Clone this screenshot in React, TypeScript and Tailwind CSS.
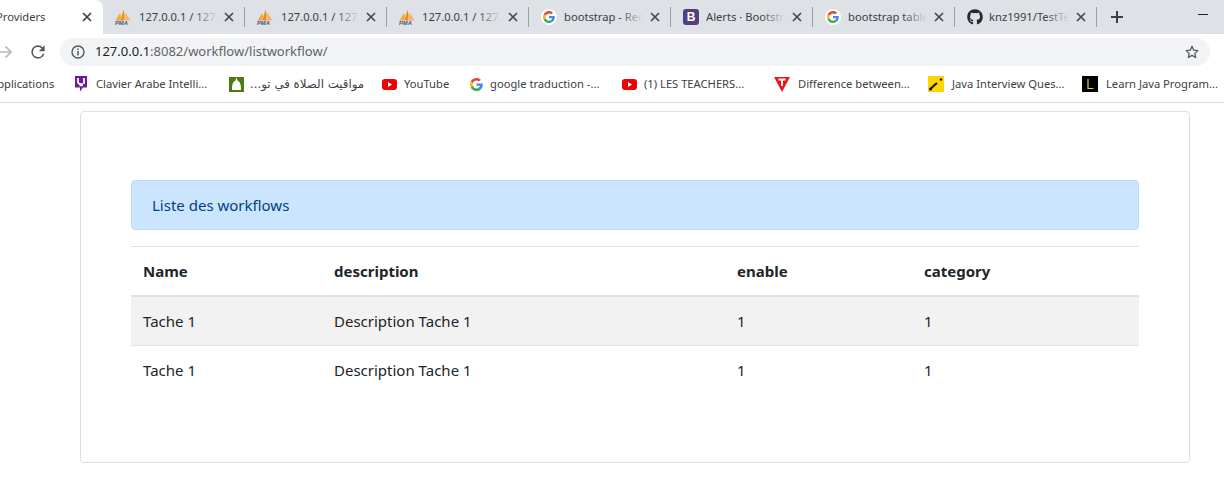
import React from "react";
import { FaGithub } from "react-icons/fa";

const ui = { fontFamily: '"Noto Sans", "Open Sans", sans-serif' };

function Close({ dark = false }: { dark?: boolean }) {
  return (
    <svg width="10" height="10" viewBox="0 0 10 10" className="shrink-0">
      <path d="M1 1L9 9M9 1L1 9" stroke={dark ? "#3c4043" : "#45484c"} strokeWidth="1.7" fill="none" />
    </svg>
  );
}

function Pma() {
  return (
    <svg width="16" height="16" viewBox="0 0 16 16" className="shrink-0">
      <path d="M0.500 11.500L5 4L6 7L5.500 11.500Z" fill="#f7a745" />
      <path d="M5.500 11.500L8.500 0.500L9.500 6L9 11.500Z" fill="#ee8a1c" />
      <path d="M9 11.500L10.500 3.500L15.500 11.500Z" fill="#f9b56e" />
      <text x="0" y="16" fontSize="5.8" fontWeight="700" fontStyle="italic" fill="#46597a" fontFamily="Liberation Sans, sans-serif">PMA</text>
    </svg>
  );
}

function GoogleG({ size = 14 }: { size?: number }) {
  return (
    <svg width={size} height={size} viewBox="0 0 48 48" className="shrink-0">
      <path fill="#EA4335" d="M24 9.5c3.5 0 6.700 1.300 9.200 3.500l6.900-6.900C35.900 2.400 30.300 0 24 0 14.600 0 6.500 5.400 2.600 13.200l8 6.200C12.500 13.700 17.800 9.500 24 9.500z" />
      <path fill="#4285F4" d="M46.900 24.500c0-1.600-.1-3.100-.4-4.500H24v9h12.900c-.6 3-2.200 5.500-4.800 7.200l7.700 6c4.500-4.200 7.100-10.300 7.100-17.700z" />
      <path fill="#FBBC05" d="M10.600 28.600c-.5-1.400-.8-3-.8-4.600s.3-3.200.8-4.600l-8-6.200C.9 16.500 0 20.100 0 24s.9 7.500 2.600 10.800l8-6.200z" />
      <path fill="#34A853" d="M24 48c6.500 0 11.900-2.100 15.900-5.800l-7.700-6c-2.200 1.500-5 2.300-8.200 2.300-6.200 0-11.500-4.200-13.400-9.900l-8 6.200C6.500 42.600 14.600 48 24 48z" />
    </svg>
  );
}

function GoogleBadge() {
  return (
    <span className="w-4 h-4 rounded-full bg-white flex items-center justify-center shrink-0">
      <GoogleG size={12} />
    </span>
  );
}

function Youtube() {
  return (
    <svg width="15" height="11" viewBox="0 0 15 11" className="shrink-0">
      <rect width="15" height="11" rx="3" fill="#f00000" />
      <path d="M6 3L10 5.500L6 8Z" fill="#fff" />
    </svg>
  );
}

function Tab({ icon, title, textCls = "ml-[8px] w-[78px]" }: { icon: React.ReactNode; title: string; textCls?: string }) {
  return (
    <div className="relative flex items-center h-[34px] w-[142px] shrink-0">
      <div className="flex items-center justify-between w-full h-[20px] pl-[12px] pr-[10px] border-r border-r-[#9aa0a6]">
        <div className="flex items-center">
          <span className="w-4 flex justify-center shrink-0">{icon}</span>
          <span className={`relative overflow-hidden whitespace-nowrap text-[11.2px] text-[#3c4043] ${textCls}`}>
            {title}
            <span className="absolute right-0 top-0 bottom-0 w-6 bg-gradient-to-r from-transparent to-[#dee1e6]" />
          </span>
        </div>
        <Close />
      </div>
    </div>
  );
}

function Mark({ icon, text, cls, gap = "ml-[7px]", arabic = false }: { icon: React.ReactNode; text: string; cls: string; gap?: string; arabic?: boolean }) {
  return (
    <div className={`flex items-center shrink-0 ${cls}`}>
      <span className="w-4 flex justify-center shrink-0">{icon}</span>
      <span
        dir={arabic ? "rtl" : undefined}
        className={`${gap} whitespace-nowrap text-[11.2px] text-[#3c4043]`}
        style={arabic ? { fontFamily: '"DejaVu Sans", sans-serif', fontSize: 11.8 } : undefined}
      >
        {text}
      </span>
    </div>
  );
}

const rows = [
  { bg: "bg-[#f2f2f2]", h: "h-[50px]" },
  { bg: "bg-white", h: "h-[49px]" },
];

export default function App() {
  return (
    <div className="w-[1224px] h-[492px] overflow-hidden bg-white text-[#212529]" style={ui}>
      {/* tab strip */}
      <div className="flex items-center h-[34px] bg-[#dee1e6]">
        <div className="relative flex items-center w-[103px] h-[34px] shrink-0 bg-white rounded-tr-[8px] overflow-hidden">
          <span className="ml-[-4px] w-[86px] shrink-0 whitespace-nowrap text-[11.2px] text-[#3c4043]">Providers</span>
          <Close dark />
        </div>
        <Tab icon={<Pma />} title="127.0.0.1 / 127.0.0.1" />
        <Tab icon={<Pma />} title="127.0.0.1 / 127.0.0.1" />
        <Tab icon={<Pma />} title="127.0.0.1 / 127.0.0.1" textCls="ml-[7px] w-[79px]" />
        <Tab icon={<GoogleBadge />} title="bootstrap - Recherche" textCls="ml-[7px] w-[79px]" />
        <Tab
          icon={
            <span className="w-4 h-4 rounded-[3px] bg-[#563d7c] text-white text-[12px] font-bold flex items-center justify-center" style={{ fontFamily: '"Liberation Sans", sans-serif' }}>
              B
            </span>
          }
          title="Alerts · Bootstrap"
          textCls="ml-[7px] w-[79px]"
        />
        <Tab icon={<GoogleBadge />} title="bootstrap table" textCls="ml-[7px] w-[79px]" />
        <Tab icon={<FaGithub size={16} color="#24292e" />} title="knz1991/TestTest" textCls="ml-[6px] w-[80px]" />
        <svg width="14" height="14" viewBox="0 0 14 14" className="ml-[13px] shrink-0">
          <path d="M7 1V13M1 7H13" stroke="#3c4043" strokeWidth="2" fill="none" />
        </svg>
        <div className="ml-auto mr-[16px] mb-[6px] w-[10px] h-px bg-[#222]" />
      </div>

      {/* address bar */}
      <div className="flex items-center h-[34px] pt-[2px] bg-white">
        <svg width="16" height="16" viewBox="0 0 16 16" className="ml-[-3px] shrink-0">
          <path d="M1 8H14M8.500 2.500L14 8L8.500 13.500" stroke="#b4b6b9" strokeWidth="1.700" fill="none" />
        </svg>
        <svg width="20" height="20" viewBox="0 0 24 24" className="ml-[15px] shrink-0">
          <path fill="#55585c" d="M17.650 6.350A7.960 7.960 0 0 0 12 4a8 8 0 1 0 7.740 10h-2.080A6 6 0 1 1 12 6c1.660 0 3.140.69 4.220 1.780L13 11h7V4l-2.350 2.350z" />
        </svg>
        <div className="flex items-center ml-[12px] w-[1150px] h-[28px] rounded-full bg-[#f1f3f4]">
          <svg width="14" height="14" viewBox="0 0 14 14" className="ml-[11px] shrink-0">
            <circle cx="7" cy="7" r="6" stroke="#55585c" strokeWidth="1.400" fill="none" />
            <path d="M7 6V10.500M7 3.500V5" stroke="#55585c" strokeWidth="1.500" fill="none" />
          </svg>
          <span className="ml-[10px] text-[13px] text-[#5f6368] whitespace-nowrap">
            <span className="text-[#202124]">127.0.0.1</span>:8082/workflow/listworkflow/
          </span>
          <svg width="16" height="16" viewBox="0 0 24 24" className="ml-auto mr-[10px] shrink-0">
            <path d="M12 3.500L14.600 9.200L20.800 9.900L16.200 14.100L17.500 20.300L12 17.100L6.500 20.300L7.800 14.100L3.200 9.900L9.400 9.200Z" stroke="#55585c" strokeWidth="1.900" fill="none" strokeLinejoin="round" />
          </svg>
        </div>
      </div>

      {/* bookmarks */}
      <div className="flex items-center h-[35px] pb-[1px] bg-white border-b border-b-[#dadce0] overflow-hidden">
        <span className="ml-[-10px] w-[83px] shrink-0 whitespace-nowrap text-[11.2px] text-[#3c4043]">Applications</span>
        <Mark
          cls="w-[155px]"
          text="Clavier Arabe Intelli..."
          icon={
            <svg width="14" height="16" viewBox="0 0 14 16" className="shrink-0">
              <path d="M1 0H13V11.500L9 11.500L6 15.500V11.500H1Z" fill="#6a1b9a" />
              <path d="M4 2V6C4 7.500 5 8 7 8H8V9.500H5.500M10 2V8" stroke="#fff" strokeWidth="1.700" fill="none" />
            </svg>
          }
        />
        <Mark
          cls="w-[153px]"
          arabic
          gap="ml-[6px]"
          text="مواقيت الصلاة في تو..."
          icon={
            <svg width="15" height="15" viewBox="0 0 15 15" className="shrink-0">
              <rect width="15" height="15" fill="#4d7a12" />
              <path d="M7.500 0.500L8.500 3.500C11.500 5 12 8 12 13H3C3 8 3.500 5 6.500 3.500Z" fill="#fff" />
              <path d="M1.500 15V9L3 6V15Z" fill="#4d7a12" />
            </svg>
          }
        />
        <Mark cls="w-[87px]" text="YouTube" icon={<Youtube />} />
        <Mark cls="w-[153px]" gap="ml-[6px]" text="google traduction -..." icon={<GoogleG size={13} />} />
        <Mark cls="w-[153px]" text="(1) LES TEACHERS..." icon={<Youtube />} />
        <Mark
          cls="w-[154px]"
          gap="ml-[8px]"
          text="Difference between..."
          icon={
            <svg width="16" height="16" viewBox="0 0 16 16" className="shrink-0">
              <path d="M0 1H16L8 16Z" fill="#f01414" />
              <path d="M4.500 3.500H11.500M8 3.500V10" stroke="#fff" strokeWidth="2" fill="none" />
            </svg>
          }
        />
        <Mark
          cls="w-[154px]"
          gap="ml-[8px]"
          text="Java Interview Ques..."
          icon={
            <svg width="16" height="16" viewBox="0 0 16 16" className="shrink-0">
              <rect width="16" height="16" fill="#ffd500" />
              <path d="M2.500 13L6 9.500L9 7" stroke="#111" strokeWidth="2" fill="none" />
              <circle cx="2.500" cy="13" r="1.500" fill="#111" />
              <circle cx="13" cy="3.500" r="1.200" fill="#111" />
            </svg>
          }
        />
        <Mark
          cls="w-[142px]"
          gap="ml-[8px]"
          text="Learn Java Program..."
          icon={
            <svg width="16" height="16" viewBox="0 0 16 16" className="shrink-0">
              <rect width="16" height="16" fill="#000" />
              <path d="M6 3V12.500H11.500" stroke="#e6d51e" strokeWidth="1.200" fill="none" />
            </svg>
          }
        />
      </div>

      {/* page */}
      <div className="ml-[80px] mt-[8px] w-[1110px] h-[352px] bg-white border border-[#dfdfdf] rounded-[4px] pt-[68px] px-[50px]">
        <div className="h-[50px] flex items-center px-[20px] bg-[#cce5ff] border border-[#b8daff] rounded-[4px] text-[15px] text-[#004085]">
          Liste des workflows
        </div>
        <table className="mt-[16px] w-[1008px] table-fixed border-collapse text-[15px]">
          <colgroup>
            <col className="w-[191px]" />
            <col className="w-[403px]" />
            <col className="w-[187px]" />
            <col />
          </colgroup>
          <thead>
            <tr className="h-[49px] border-t border-t-[#dee2e6] border-b-2 border-b-[#dee2e6]">
              <th className="px-[12px] text-left font-bold">Name</th>
              <th className="px-[12px] text-left font-bold">description</th>
              <th className="px-[12px] text-left font-bold">enable</th>
              <th className="px-[12px] text-left font-bold">category</th>
            </tr>
          </thead>
          <tbody>
            {rows.map((r, i) => (
              <tr key={i} className={`${r.h} ${r.bg} ${i === 0 ? "border-b border-b-[#dee2e6]" : ""}`}>
                <td className="px-[12px]">Tache 1</td>
                <td className="px-[12px]">Description Tache 1</td>
                <td className="px-[12px]">1</td>
                <td className="px-[12px]">1</td>
              </tr>
            ))}
          </tbody>
        </table>
      </div>
    </div>
  );
}
